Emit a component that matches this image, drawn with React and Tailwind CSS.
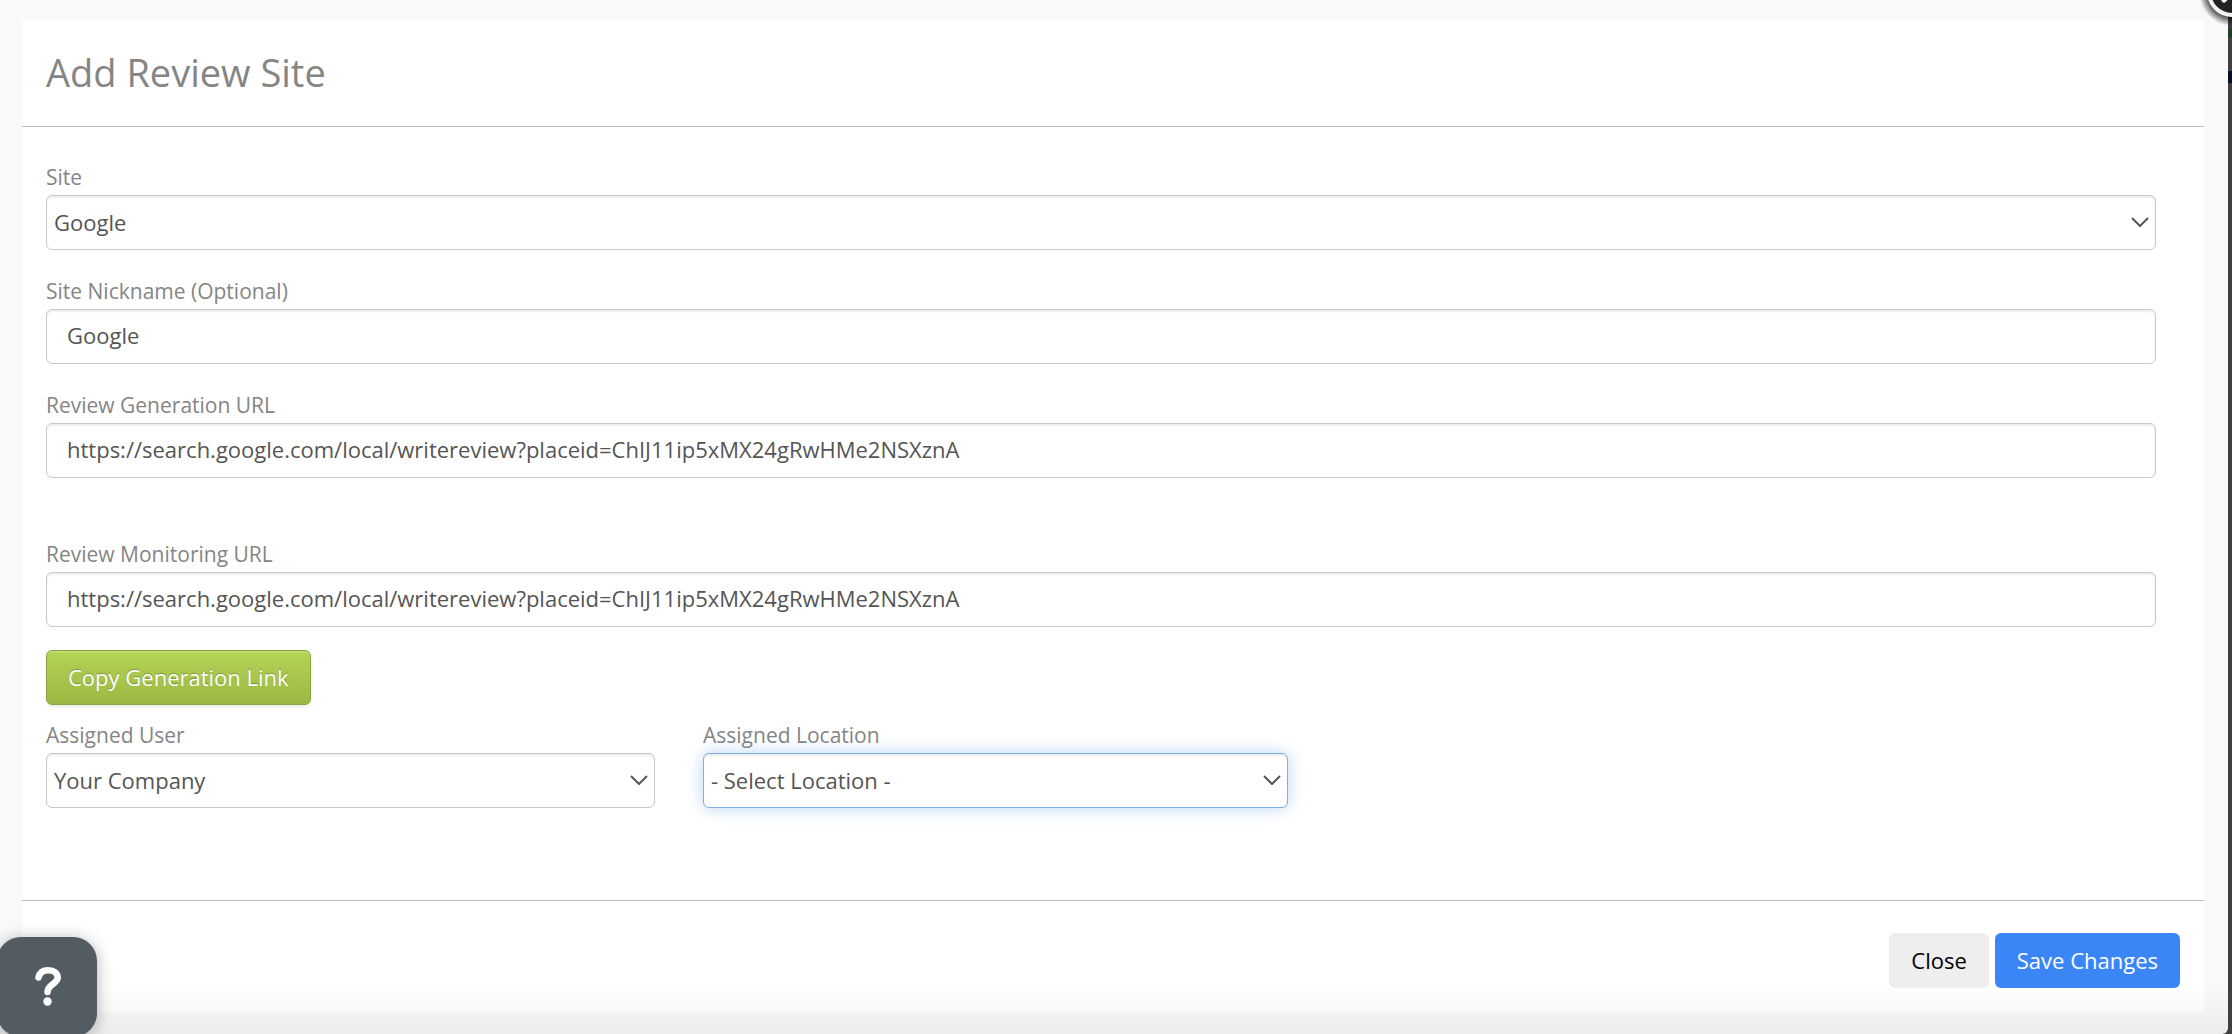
import React, { useState } from 'react';

const PLACE_URL = 'https://search.google.com/local/writereview?placeid=ChIJ11ip5xMX24gRwHMe2NSXznA';

function Label({ htmlFor, children }) {
  return (
    <label htmlFor={htmlFor} className="block mb-[3px] text-[21px] leading-[30px] text-[#858585]">
      {children}
    </label>
  );
}

function TextField({ id, label, value, onChange }) {
  return (
    <div>
      <Label htmlFor={id}>{label}</Label>
      <input
        id={id}
        type="text"
        value={value}
        onChange={(e) => onChange(e.target.value)}
        className="block w-full h-[55px] px-5 pb-[3px] rounded-md border border-[#c8c8c8] bg-white text-[22px] text-[#555555] shadow-[inset_0_2px_2px_rgba(0,0,0,0.07)] outline-none"
      />
    </div>
  );
}

function SelectField({ id, label, options, active = false }) {
  return (
    <div>
      <Label htmlFor={id}>{label}</Label>
      <div className="relative">
        <select
          id={id}
          className={
            active
              ? 'block w-full h-[55px] appearance-none pl-[7px] pr-10 rounded-md border border-[#7eb0e4] bg-white text-[22px] text-[#555555] shadow-[inset_0_2px_2px_rgba(0,0,0,0.07),0_0_16px_rgba(82,148,226,0.4)] outline-none'
              : 'block w-full h-[55px] appearance-none pl-[7px] pr-10 rounded-md border border-[#c8c8c8] bg-white text-[22px] text-[#555555] shadow-[inset_0_2px_2px_rgba(0,0,0,0.07)] outline-none'
          }
        >
          {options.map((option) => (
            <option key={option}>{option}</option>
          ))}
        </select>
        <svg
          className="absolute right-[7px] top-[22px] w-[18px] h-[10px] pointer-events-none"
          viewBox="0 0 18 10"
          fill="none"
          stroke="#555555"
          strokeWidth="2"
          aria-hidden="true"
        >
          <path d="M1 1l8 8 8-8" />
        </svg>
      </div>
    </div>
  );
}

export default function App() {
  const [nickname, setNickname] = useState('Google');
  const [generationUrl, setGenerationUrl] = useState(PLACE_URL);
  const [monitoringUrl, setMonitoringUrl] = useState(PLACE_URL);

  return (
    <div className="relative flex min-h-screen overflow-hidden bg-[#404040] font-['Open_Sans',sans-serif]">
      {/* Dialog frame */}
      <div className="relative flex flex-1 min-w-0 mr-1 pt-5 pb-[22px] pl-[22px] pr-6 bg-[#f9f9f9] rounded-br-md">
        <main className="flex flex-1 min-w-0 flex-col bg-white">
          <header className="px-6 pt-[25px] pb-[27px] border-b border-[#bdbdbd]">
            <h1 className="text-[38px] leading-[54px] text-[#858585]">Add Review Site</h1>
          </header>

          <form className="flex-1 pt-[35px] pl-6 pr-12 pb-[91px]">
            <div className="flex flex-col gap-[26px]">
              <SelectField id="site" label="Site" options={['Google']} />
              <TextField id="nickname" label="Site Nickname (Optional)" value={nickname} onChange={setNickname} />
              <TextField id="generation-url" label="Review Generation URL" value={generationUrl} onChange={setGenerationUrl} />
            </div>
            <div className="mt-[61px]">
              <TextField id="monitoring-url" label="Review Monitoring URL" value={monitoringUrl} onChange={setMonitoringUrl} />
            </div>

            <button
              type="button"
              className="block mt-[23px] mb-[15px] h-[55px] px-[21px] rounded-md border border-[#8aa53c] bg-linear-to-b from-[#b4d455] to-[#9cb843] text-[22px] text-white text-shadow-[0_-1px_1px_rgba(0,0,0,0.25)] shadow-[inset_0_2px_0_rgba(255,255,255,0.15),0_2px_3px_rgba(0,0,0,0.08)]"
            >
              Copy Generation Link
            </button>

            <div className="grid grid-cols-[609fr_585fr_820fr] gap-12">
              <SelectField id="assigned-user" label="Assigned User" options={['Your Company']} />
              <SelectField id="assigned-location" label="Assigned Location" options={['- Select Location -']} active />
            </div>
          </form>

          <footer className="flex justify-end gap-[6px] px-6 pt-8 pb-6 border-t border-[#bdbdbd]">
            <button type="button" className="h-[55px] px-[22px] rounded-md bg-[#eeeeee] text-[22px] text-black">
              Close
            </button>
            <button type="button" className="h-[55px] px-[22px] rounded-md bg-[#3b86f7] text-[22px] text-white">
              Save Changes
            </button>
          </footer>
        </main>

        {/* Shade along the bottom edge */}
        <div className="absolute inset-x-0 bottom-0 h-12 bg-linear-to-t from-black/5 to-transparent pointer-events-none" />
      </div>

      {/* Edge of the page behind the dialog */}
      <div className="absolute right-0 top-7 h-[10px] w-1 rounded-l-full bg-[#1e401e]" />
      <div className="absolute right-0 top-[71px] h-3 w-1 bg-[#051028]" />

      <button type="button" aria-label="Close dialog" className="absolute right-0 top-0">
        <svg className="w-8 h-[25px]" viewBox="0 0 32 25" aria-hidden="true">
          <defs>
            <radialGradient id="halo" gradientUnits="userSpaceOnUse" cx="32" cy="-7" r="33">
              <stop offset="0.72" stopColor="#000" stopOpacity="0.7" />
              <stop offset="1" stopColor="#000" stopOpacity="0" />
            </radialGradient>
          </defs>
          <circle cx="32" cy="-7" r="33" fill="url(#halo)" />
          <circle cx="32" cy="-8" r="23" fill="#222" stroke="#f2f2f2" strokeWidth="4" />
          <path d="M24 0l12-12" stroke="#fff" strokeWidth="5" strokeLinecap="round" />
        </svg>
      </button>

      {/* Help launcher */}
      <button
        type="button"
        aria-label="Help"
        className="absolute -left-[3px] -bottom-[3px] flex items-center justify-center w-[100px] h-[100px] rounded-3xl bg-[#545c63] shadow-[0_2px_16px_rgba(0,0,0,0.3)]"
      >
        <svg className="w-[28px] h-[42px]" viewBox="0 0 28 42" fill="none" aria-hidden="true">
          <path
            d="M5.500 11.500C6.500 7 10 4.200 15 4.200C20.500 4.200 24.700 7 24.700 11.800C24.700 17.500 14.500 18.500 14.500 26"
            stroke="#fff"
            strokeWidth="6.500"
            strokeLinecap="round"
          />
          <circle cx="14.500" cy="35.500" r="4.200" fill="#fff" />
        </svg>
      </button>
    </div>
  );
}
